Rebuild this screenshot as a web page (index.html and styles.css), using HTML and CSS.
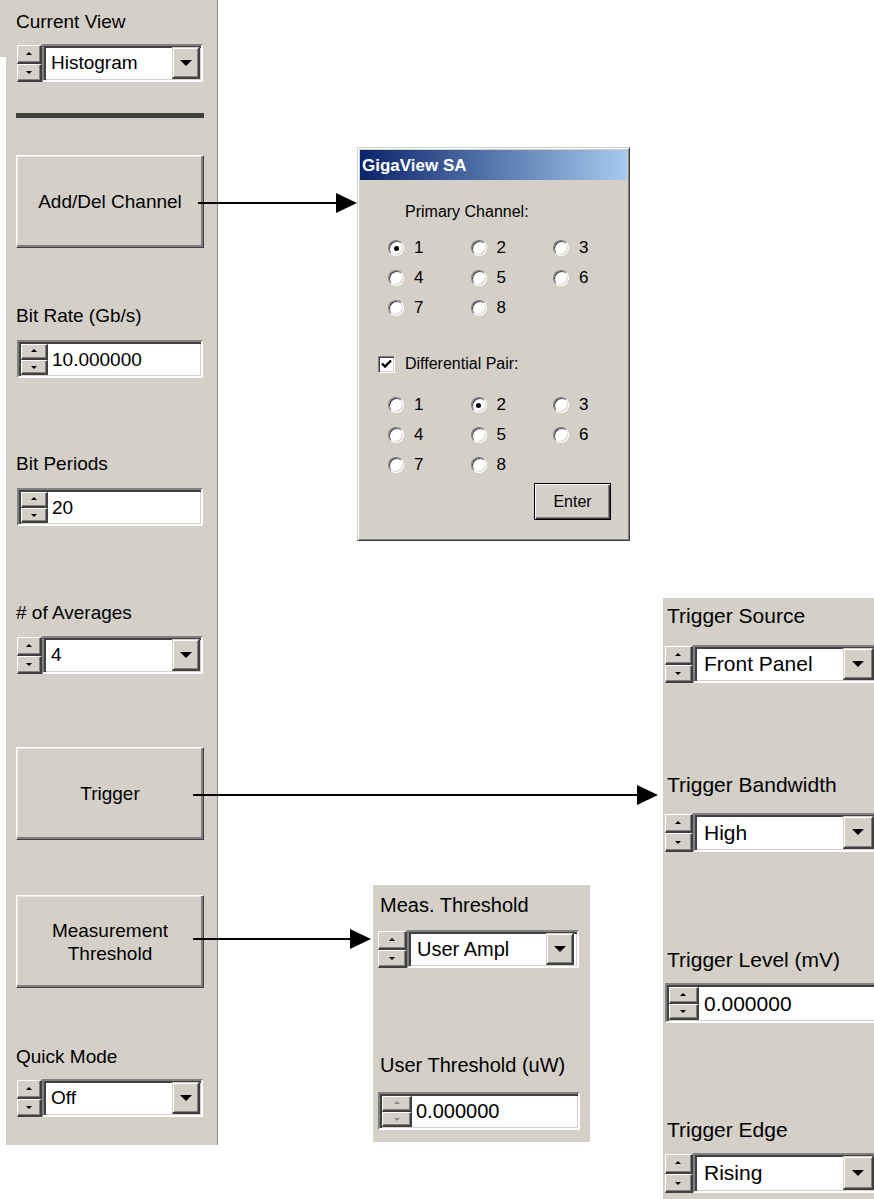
FILE: index.html
```html
<!DOCTYPE html>
<html>
<head>
<meta charset="utf-8">
<title>GigaView SA controls</title>
<link rel="stylesheet" href="styles.css">
</head>
<body>
<div class="canvas">

  <!-- Left control panel -->
  <div class="panel lp">
    <div class="lbl">Current View</div>
    <div class="ctl m11">
      <div class="spin"><span class="sb up"></span><span class="sb dn"></span></div>
      <div class="combo"><span class="val">Histogram</span><span class="drop"></span></div>
    </div>
    <div class="sep"></div>
    <div class="btn b1">Add/Del Channel</div>

    <div class="lbl m57">Bit Rate (Gb/s)</div>
    <div class="ctl tb m13">
      <div class="spin"><span class="sb up"></span><span class="sb dn"></span></div>
      <span class="val">10.000000</span>
    </div>

    <div class="lbl m75">Bit Periods</div>
    <div class="ctl tb m13">
      <div class="spin"><span class="sb up"></span><span class="sb dn"></span></div>
      <span class="val">20</span>
    </div>

    <div class="lbl m76"># of Averages</div>
    <div class="ctl m12">
      <div class="spin"><span class="sb up"></span><span class="sb dn"></span></div>
      <div class="combo"><span class="val">4</span><span class="drop"></span></div>
    </div>

    <div class="btn b2">Trigger</div>
    <div class="btn b3">Measurement<br>Threshold</div>

    <div class="lbl m58">Quick Mode</div>
    <div class="ctl m11">
      <div class="spin"><span class="sb up"></span><span class="sb dn"></span></div>
      <div class="combo"><span class="val">Off</span><span class="drop"></span></div>
    </div>
  </div>

  <!-- Channel dialog -->
  <div class="dlg">
    <div class="title">GigaView SA</div>
    <div class="dbody">
      <div class="dlabel">Primary Channel:</div>
      <div class="rgrid g1">
        <div class="radio"><span class="rdot on"></span>1</div>
        <div class="radio"><span class="rdot"></span>2</div>
        <div class="radio"><span class="rdot"></span>3</div>
        <div class="radio"><span class="rdot"></span>4</div>
        <div class="radio"><span class="rdot"></span>5</div>
        <div class="radio"><span class="rdot"></span>6</div>
        <div class="radio"><span class="rdot"></span>7</div>
        <div class="radio"><span class="rdot"></span>8</div>
      </div>
      <div class="chk">
        <span class="cbox"><svg width="11" height="10" viewBox="0 0 11 10"><path d="M1 4.5 L4 7.5 L10 1.5" fill="none" stroke="#000" stroke-width="2.4"/></svg></span>
        <span>Differential Pair:</span>
      </div>
      <div class="rgrid g2">
        <div class="radio"><span class="rdot"></span>1</div>
        <div class="radio"><span class="rdot on"></span>2</div>
        <div class="radio"><span class="rdot"></span>3</div>
        <div class="radio"><span class="rdot"></span>4</div>
        <div class="radio"><span class="rdot"></span>5</div>
        <div class="radio"><span class="rdot"></span>6</div>
        <div class="radio"><span class="rdot"></span>7</div>
        <div class="radio"><span class="rdot"></span>8</div>
      </div>
      <div class="enter-row"><div class="enter">Enter</div></div>
    </div>
  </div>

  <!-- Trigger panel -->
  <div class="panel tp">
    <div class="lbl">Trigger Source</div>
    <div class="ctl m17">
      <div class="spin"><span class="sb up"></span><span class="sb dn"></span></div>
      <div class="combo"><span class="val">Front Panel</span><span class="drop"></span></div>
    </div>
    <div class="lbl m90">Trigger Bandwidth</div>
    <div class="ctl m16 h39">
      <div class="spin"><span class="sb up"></span><span class="sb dn"></span></div>
      <div class="combo"><span class="val">High</span><span class="drop"></span></div>
    </div>
    <div class="lbl m96">Trigger Level (mV)</div>
    <div class="ctl tb m11 h40">
      <div class="spin"><span class="sb up"></span><span class="sb dn"></span></div>
      <span class="val">0.000000</span>
    </div>
    <div class="lbl m95">Trigger Edge</div>
    <div class="ctl m11 h40">
      <div class="spin"><span class="sb up"></span><span class="sb dn"></span></div>
      <div class="combo"><span class="val">Rising</span><span class="drop"></span></div>
    </div>
  </div>

  <!-- Measurement threshold panel -->
  <div class="panel mp">
    <div class="lbl">Meas. Threshold</div>
    <div class="ctl m13">
      <div class="spin"><span class="sb up"></span><span class="sb dn"></span></div>
      <div class="combo"><span class="val">User Ampl</span><span class="drop"></span></div>
    </div>
    <div class="lbl m86">User Threshold (uW)</div>
    <div class="ctl tb m15 wide">
      <div class="spin off"><span class="sb up"></span><span class="sb dn"></span></div>
      <span class="val">0.000000</span>
    </div>
  </div>

  <!-- Connector arrows -->
  <svg class="arrows" width="874" height="1199" viewBox="0 0 874 1199">
    <line x1="198" y1="203" x2="338" y2="203" stroke="#000" stroke-width="2"/>
    <polygon points="336,193 357,203 336,213" fill="#000"/>
    <line x1="193" y1="795" x2="639" y2="795" stroke="#000" stroke-width="2"/>
    <polygon points="637,785 658,795 637,805" fill="#000"/>
    <line x1="193" y1="939" x2="352" y2="939" stroke="#000" stroke-width="2"/>
    <polygon points="350,929 371,939 350,949" fill="#000"/>
  </svg>
</div>
</body>
</html>
```

FILE: styles.css
```css
html, body {
  margin: 0;
  padding: 0;
  background: #fff;
}

.canvas {
  position: relative;
  width: 874px;
  height: 1199px;
  overflow: hidden;
  font-family: "Liberation Sans", Arial, sans-serif;
  color: #000;
}

.panel {
  position: absolute;
  background: #d4d0c8;
  box-sizing: border-box;
  display: flex;
  flex-direction: column;
  align-items: flex-start;
}

/* ---------- left panel ---------- */
.lp {
  left: 6px;
  top: 0;
  width: 212px;
  height: 1145px;
  border-right: 1px solid #8a8a8a;
  padding: 11px 13px 0 10px;
  font-size: 19px;
  --h: 38px;
  --sw: 25px;
  --dw: 28px;
  --cw: 186px;
}
.lp::before {
  content: "";
  position: absolute;
  left: -6px;
  top: 0;
  width: 6px;
  height: 57px;
  background: #d4d0c8;
}
.lp .lbl { line-height: 22px; }
.lp .ctl { margin-left: 1px; }

.sep {
  margin-top: 31px;
  width: 188px;
  height: 5px;
  background: #404040;
}

.btn {
  width: 188px;
  height: 93px;
  box-sizing: border-box;
  display: flex;
  align-items: center;
  justify-content: center;
  text-align: center;
  line-height: 23px;
  background: #d4d0c8;
  border: 1px solid;
  border-color: #fff #404040 #404040 #fff;
  box-shadow: inset -2px -2px #808080, inset 1px 1px #e8e6e1;
}
.b1 { margin-top: 37px; }
.b2 { margin-top: 73px; }
.b3 { margin-top: 55px; }

/* margins */
.m11 { margin-top: 11px; }
.m12 { margin-top: 12px; }
.m13 { margin-top: 13px; }
.m15 { margin-top: 15px; }
.m16 { margin-top: 16px; }
.m17 { margin-top: 17px; }
.m57 { margin-top: 57px; }
.m58 { margin-top: 58px; }
.m75 { margin-top: 75px; }
.m76 { margin-top: 76px; }
.m86 { margin-top: 86px; }
.m90 { margin-top: 90px; }
.m95 { margin-top: 95px; }
.m96 { margin-top: 96px; }
.h39 { --h: 39px; }
.h40 { --h: 40px; }

.lbl { white-space: nowrap; }

/* ---------- spin + combo controls ---------- */
.ctl {
  display: flex;
  height: var(--h);
  width: var(--cw);
  box-sizing: border-box;
  flex-shrink: 0;
}

.spin {
  width: var(--sw);
  flex-shrink: 0;
  display: flex;
  flex-direction: column;
  padding: 1px 0 0;
  box-sizing: border-box;
}
.sb {
  flex: 1;
  position: relative;
  box-sizing: border-box;
  background: #d4d0c8;
  border: 1px solid;
  border-width: 1px 2px 2px 1px;
  border-color: #fff #404040 #404040 #fff;
  box-shadow: inset -1px -1px #808080;
}
.sb::after {
  content: "";
  position: absolute;
  left: 50%;
  top: 50%;
  margin-left: -3px;
  border-left: 3px solid transparent;
  border-right: 3px solid transparent;
}
.sb.up::after {
  margin-top: -2px;
  border-bottom: 3px solid #000;
}
.sb.dn::after {
  margin-top: -1px;
  border-top: 3px solid #000;
}
.spin.off .sb.up::after { border-bottom-color: #8a8a8a; }
.spin.off .sb.dn::after { border-top-color: #8a8a8a; }

.combo {
  flex: 1;
  display: flex;
  align-items: stretch;
  background: #fff;
  border: 2px solid;
  border-color: #808080 #fff #fff #808080;
  box-shadow: inset 2px 2px #404040, inset -1px -1px #d4d0c8;
  padding: 1px 1px 1px 0;
  box-sizing: border-box;
  min-width: 0;
}
.val {
  flex: 1;
  display: flex;
  align-items: center;
  padding-left: 7px;
  white-space: nowrap;
  overflow: hidden;
}
.drop {
  width: var(--dw);
  flex-shrink: 0;
  position: relative;
  box-sizing: border-box;
  background: #d4d0c8;
  border: 1px solid;
  border-width: 1px 2px 2px 1px;
  border-color: #d4d0c8 #404040 #404040 #d4d0c8;
  box-shadow: inset 1px 1px #fff, inset -1px -1px #808080;
}
.drop::after {
  content: "";
  position: absolute;
  left: 50%;
  top: 50%;
  margin-left: -6px;
  margin-top: -3px;
  border-left: 6px solid transparent;
  border-right: 6px solid transparent;
  border-top: 6px solid #000;
}

/* text box with spin inside */
.ctl.tb {
  background: #fff;
  border: 2px solid;
  border-color: #808080 #fff #fff #808080;
  box-shadow: inset 2px 2px #404040, inset -1px -1px #d4d0c8;
  padding: 2px 1px 1px 2px;
}
.ctl.tb .spin {
  padding: 0;
  width: calc(var(--sw) + 2px);
}
.ctl.tb .val { padding-left: 4px; }

/* ---------- trigger panel ---------- */
.tp {
  left: 663px;
  top: 598px;
  width: 211px;
  height: 601px;
  padding: 6px 0 0 2px;
  overflow: hidden;
  font-size: 21px;
  --h: 38px;
  --sw: 28px;
  --dw: 31px;
  --cw: 212px;
}
.tp .lbl { line-height: 24px; margin-left: 2px; }
.tp .val { padding-left: 9px; }
.tp .ctl.tb .val { padding-left: 5px; }
.tp .sb::after { margin-left: -3.5px; border-left-width: 3.5px; border-right-width: 3.5px; }

/* ---------- measurement panel ---------- */
.mp {
  left: 373px;
  top: 885px;
  width: 217px;
  height: 257px;
  padding: 9px 0 0 5px;
  font-size: 20px;
  --h: 38px;
  --sw: 29px;
  --dw: 28px;
  --cw: 201px;
}
.mp .lbl { line-height: 23px; margin-left: 2px; }
.mp .val { padding-left: 8px; }
.mp .ctl.wide { --cw: 202px; }
.mp .ctl.tb .spin { width: 30px; }
.mp .ctl.tb .val { padding-left: 4px; }
.mp .combo { padding-right: 3px; }

/* ---------- dialog ---------- */
.dlg {
  position: absolute;
  left: 357px;
  top: 147px;
  width: 273px;
  height: 394px;
  box-sizing: border-box;
  background: #d4d0c8;
  border: 1px solid;
  border-color: #d4d0c8 #404040 #404040 #d4d0c8;
  box-shadow: inset 1px 1px #fff, inset -1px -1px #808080;
  padding: 2px;
  font-size: 16px;
}
.title {
  height: 30px;
  line-height: 31px;
  padding-left: 2px;
  font-size: 17px;
  font-weight: bold;
  color: #fff;
  background: linear-gradient(to right, #0a246a, #a6caf0);
  white-space: nowrap;
}
.dbody {
  display: flex;
  flex-direction: column;
  align-items: flex-start;
}
.dlabel {
  margin: 23px 0 0 45px;
  line-height: 18px;
}
.rgrid {
  margin-left: 28px;
  display: grid;
  grid-template-columns: 82.5px 82.5px 60px;
  grid-auto-rows: 30px;
}
.g1 { margin-top: 12px; }
.g2 { margin-top: 15px; }
.radio {
  display: flex;
  align-items: center;
  gap: 10px;
  font-size: 17px;
}
.rdot {
  width: 16px;
  height: 16px;
  flex-shrink: 0;
  border-radius: 50%;
  box-sizing: border-box;
  background: #fff;
  border: 1px solid;
  border-color: #808080 #fff #fff #808080;
  box-shadow: inset 1px 1px #404040, inset -1px -1px #d4d0c8;
  position: relative;
}
.rdot.on::after {
  content: "";
  position: absolute;
  left: 50%;
  top: 50%;
  width: 5px;
  height: 5px;
  margin: -2.5px 0 0 -2.5px;
  border-radius: 50%;
  background: #000;
}
.chk {
  margin: 30px 0 0 18px;
  height: 22px;
  display: flex;
  align-items: center;
  gap: 10px;
}
.cbox {
  width: 17px;
  height: 17px;
  box-sizing: border-box;
  background: #fff;
  border: 1px solid;
  border-color: #808080 #fff #fff #808080;
  box-shadow: inset 1px 1px #404040, inset -1px -1px #d4d0c8;
  display: flex;
  align-items: center;
  justify-content: center;
}
.cbox svg { display: block; }
.enter-row {
  align-self: stretch;
  display: flex;
  justify-content: flex-end;
  margin-top: 3px;
  padding-right: 16px;
}
.enter {
  width: 77px;
  height: 37px;
  box-sizing: border-box;
  display: flex;
  align-items: center;
  justify-content: center;
  border: 1px solid #000;
  box-shadow: inset 1px 1px #fff, inset -1px -1px #404040, inset -2px -2px #808080;
  background: #d4d0c8;
}

/* ---------- arrows ---------- */
.arrows {
  position: absolute;
  left: 0;
  top: 0;
  pointer-events: none;
}
```
